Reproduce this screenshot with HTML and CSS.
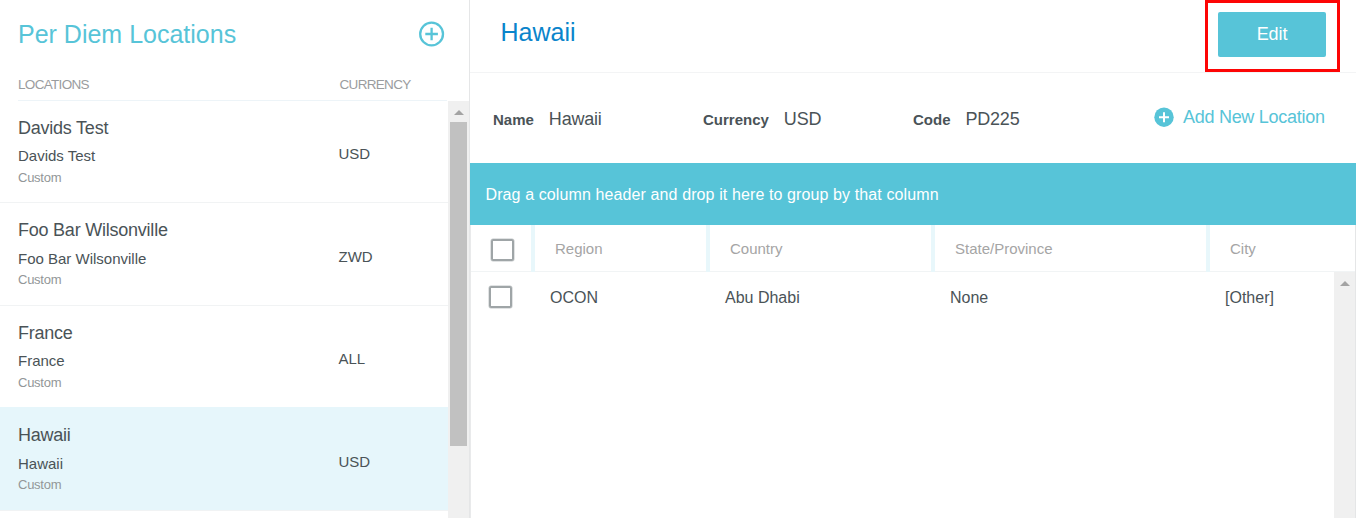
FILE: index.html
```html
<!DOCTYPE html>
<html lang="en">
<head>
<meta charset="utf-8">
<title>Per Diem Locations</title>
<link rel="stylesheet" href="styles.css">
</head>
<body>
<div class="app">
  <aside class="sidebar">
    <header class="side-head">
      <h1 class="side-title">Per Diem Locations</h1>
      <svg class="add-icon" width="26" height="26" viewBox="0 0 26 26"><circle cx="12.6" cy="13" r="11.4" fill="none" stroke="#57c4d8" stroke-width="2.3"/><path d="M12.6 6.7v12.6M6.3 13h12.6" stroke="#57c4d8" stroke-width="2.3"/></svg>
    </header>
    <div class="side-cols"><span class="col-loc">LOCATIONS</span><span class="col-cur">CURRENCY</span></div>
    <div class="list-wrap">
      <div class="list">
        <div class="item"><div class="info"><div class="name">Davids Test</div><div class="sub">Davids Test</div><div class="kind">Custom</div></div><div class="cur">USD</div></div>
        <div class="item"><div class="info"><div class="name">Foo Bar Wilsonville</div><div class="sub">Foo Bar Wilsonville</div><div class="kind">Custom</div></div><div class="cur">ZWD</div></div>
        <div class="item"><div class="info"><div class="name">France</div><div class="sub">France</div><div class="kind">Custom</div></div><div class="cur">ALL</div></div>
        <div class="item selected"><div class="info"><div class="name">Hawaii</div><div class="sub">Hawaii</div><div class="kind">Custom</div></div><div class="cur">USD</div></div>
      </div>
      <div class="scroll side-scroll"><svg class="arrow" width="10" height="5" viewBox="0 0 10 5"><path d="M0 5L5 0L10 5Z" fill="#a3a3a3"/></svg><div class="thumb"></div></div>
    </div>
  </aside>
  <main class="main">
    <header class="main-head">
      <h2 class="main-title">Hawaii</h2>
      <div class="highlight"><button class="edit">Edit</button></div>
    </header>
    <section class="details">
      <div class="field"><span class="label">Name</span><span class="value">Hawaii</span></div>
      <div class="field"><span class="label">Currency</span><span class="value">USD</span></div>
      <div class="field"><span class="label">Code</span><span class="value">PD225</span></div>
      <div class="add-loc"><svg width="20" height="20" viewBox="0 0 20 20"><circle cx="10" cy="10.2" r="9.7" fill="#57c4d8"/><path d="M10 5.2v10M5 10.2h10" stroke="#fff" stroke-width="2"/></svg><span class="add-text">Add New Location</span></div>
    </section>
    <div class="group-bar"><span class="group-text">Drag a column header and drop it here to group by that column</span></div>
    <div class="grid">
      <div class="grid-head">
        <div class="th check"><span class="box"></span></div>
        <div class="th">Region</div><div class="th">Country</div><div class="th">State/Province</div><div class="th">City</div>
      </div>
      <div class="grid-body">
        <div class="grid-row">
          <div class="td check"><span class="box"></span></div>
          <div class="td">OCON</div><div class="td">Abu Dhabi</div><div class="td">None</div><div class="td">[Other]</div>
        </div>
        <div class="scroll grid-scroll"><svg class="arrow" width="10" height="5" viewBox="0 0 10 5"><path d="M0 5L5 0L10 5Z" fill="#a3a3a3"/></svg></div>
      </div>
    </div>
  </main>
</div>
</body>
</html>
```

FILE: styles.css
```css
* { box-sizing: border-box; }
body { margin: 0; background: #fff; color: #4a5357; font-family: "Liberation Sans", Arial, sans-serif; }
.app { display: flex; width: 1356px; height: 518px; overflow: hidden; }
h1, h2 { margin: 0; font-weight: 400; }

.sidebar { width: 469px; display: flex; flex-direction: column; flex: none; }
.side-head { display: flex; justify-content: space-between; height: 70px; padding: 19px 24px 0 18px; }
.side-title { font-size: 25px; line-height: 30px; color: #57c4d8; white-space: nowrap; }
.add-icon { margin-top: 2px; }
.side-cols { display: flex; height: 31px; margin: 0 22px 0 18px; border-bottom: 1px solid #edf4f8; font-size: 13.5px; line-height: 30px; color: #9a9c9e; letter-spacing: -0.68px; }
.col-loc { width: 321.5px; }
.list-wrap { display: flex; flex: 1; min-height: 0; }
.list { width: 448px; margin-top: -0.5px; }
.item { display: flex; height: 102.5px; padding: 15px 0 0 18px; border-bottom: 1px solid #f1f3f4; }
.item:has(+ .selected) { border-bottom-color: #e6f6fb; }
.selected { background: #e6f6fb; }
.info { width: 320.5px; }
.name { font-size: 18px; line-height: 24px; letter-spacing: -0.23px; }
.sub { margin-top: 6.5px; font-size: 15px; line-height: 20px; }
.kind { margin-top: 2.5px; font-size: 13px; line-height: 18px; letter-spacing: -0.25px; color: #929698; }
.cur { padding-top: 28.5px; font-size: 15px; line-height: 20px; }

.scroll { display: flex; flex-direction: column; align-items: center; width: 21px; background: #f0f0f0; }
.side-scroll .arrow { margin: 9px 0 7px; flex: none; }
.thumb { width: 17px; height: 324px; background: #c1c1c1; }

.main { flex: 1; border-left: 1px solid #e5e6e7; min-width: 0; }
.main-head { display: flex; justify-content: space-between; height: 73px; padding: 0 16px 0 30.5px; border-bottom: 1px solid #f3f4f5; }
.main-title { padding-top: 17px; font-size: 25px; line-height: 30px; color: #0a84cb; }
.highlight { width: 135.5px; height: 71.5px; border: 3px solid #fd0505; padding: 9px 0 0 10.5px; }
.edit { width: 108px; height: 45px; padding: 0; border: 0; border-radius: 2px; background: #57c4d8; color: #fff; font: 18px "Liberation Sans", Arial, sans-serif; letter-spacing: -0.1px; }
.details { display: flex; height: 90px; padding: 34px 0 0 23px; }
.field { display: flex; width: 210px; gap: 15px; line-height: 24px; }
.label { font-size: 15px; font-weight: 700; line-height: 26px; }
.value { font-size: 18px; letter-spacing: -0.22px; }
.add-loc { display: flex; gap: 9px; margin-left: 31px; }
.add-text { font-size: 18px; line-height: 20px; color: #57c4d8; white-space: nowrap; letter-spacing: -0.28px; }
.group-bar { height: 62px; padding-left: 15.5px; background: #57c4d8; color: #fff; font-size: 16px; line-height: 63px; letter-spacing: 0.11px; }

.grid { display: flex; flex-direction: column; height: 293px; border-left: 1px solid #e9eaeb; border-right: 1px solid #e5e6e7; }
.grid-head, .grid-row { display: grid; grid-template-columns: 64px 175px 225px 275px 1fr; }
.grid-head { height: 47px; border-bottom: 1px solid #f1f4f5; font-size: 15px; line-height: 47px; color: #a5a5a5; }
.th { padding-left: 20px; border-right: 4px solid #e8f7fb; }
.th:last-child { border-right: 0; }
.grid-body { display: flex; flex: 1; }
.grid-row { flex: 1; height: 51px; font-size: 16px; line-height: 51px; }
.td { padding-left: 15px; }
.box { display: block; width: 23px; height: 22px; border: 2px solid #9fa5a7; border-radius: 2px; box-shadow: 0 0 0 0.5px #c4c8c9; }
.th.check { padding: 14px 0 0 20px; }
.td.check { padding: 14px 0 0 18px; }
.grid-scroll { padding-top: 9px; }
```
